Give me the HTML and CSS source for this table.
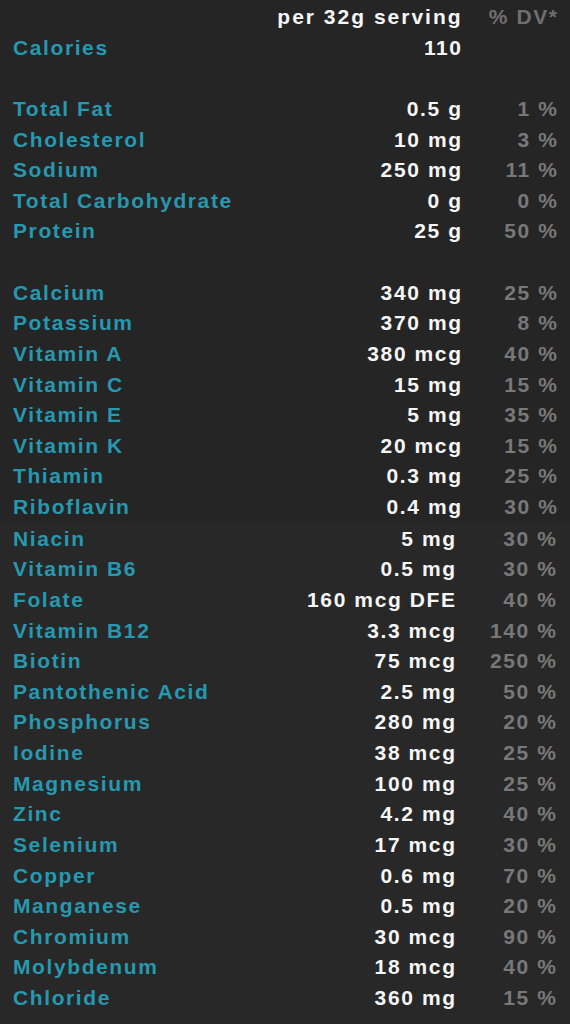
FILE: index.html
```
<!DOCTYPE html>
<html lang="en">
<head>
  <meta charset="UTF-8" />
  <meta name="viewport" content="width=device-width, initial-scale=1" />
  <title>Nutrition Facts</title>
  <link rel="stylesheet" href="styles.css">
</head>
<body>
  <div class="panel top">
    <div class="row head"><span class="name"></span><span class="amount">per 32g serving</span><span class="dv">% DV*</span></div>
    <div class="row"><span class="name">Calories</span><span class="amount">110</span><span class="dv"></span></div>
    <div class="row blank"></div>
    <div class="row"><span class="name">Total Fat</span><span class="amount">0.5 g</span><span class="dv">1 %</span></div>
    <div class="row"><span class="name">Cholesterol</span><span class="amount">10 mg</span><span class="dv">3 %</span></div>
    <div class="row"><span class="name">Sodium</span><span class="amount">250 mg</span><span class="dv">11 %</span></div>
    <div class="row"><span class="name">Total Carbohydrate</span><span class="amount">0 g</span><span class="dv">0 %</span></div>
    <div class="row"><span class="name">Protein</span><span class="amount">25 g</span><span class="dv">50 %</span></div>
    <div class="row blank"></div>
    <div class="row"><span class="name">Calcium</span><span class="amount">340 mg</span><span class="dv">25 %</span></div>
    <div class="row"><span class="name">Potassium</span><span class="amount">370 mg</span><span class="dv">8 %</span></div>
    <div class="row"><span class="name">Vitamin A</span><span class="amount">380 mcg</span><span class="dv">40 %</span></div>
    <div class="row"><span class="name">Vitamin C</span><span class="amount">15 mg</span><span class="dv">15 %</span></div>
    <div class="row"><span class="name">Vitamin E</span><span class="amount">5 mg</span><span class="dv">35 %</span></div>
    <div class="row"><span class="name">Vitamin K</span><span class="amount">20 mcg</span><span class="dv">15 %</span></div>
    <div class="row"><span class="name">Thiamin</span><span class="amount">0.3 mg</span><span class="dv">25 %</span></div>
    <div class="row"><span class="name">Riboflavin</span><span class="amount">0.4 mg</span><span class="dv">30 %</span></div>
  </div>

  <div class="panel bottom">
    <div class="row"><span class="name">Niacin</span><span class="amount">5 mg</span><span class="dv">30 %</span></div>
    <div class="row"><span class="name">Vitamin B6</span><span class="amount">0.5 mg</span><span class="dv">30 %</span></div>
    <div class="row"><span class="name">Folate</span><span class="amount">160 mcg DFE</span><span class="dv">40 %</span></div>
    <div class="row"><span class="name">Vitamin B12</span><span class="amount">3.3 mcg</span><span class="dv">140 %</span></div>
    <div class="row"><span class="name">Biotin</span><span class="amount">75 mcg</span><span class="dv">250 %</span></div>
    <div class="row"><span class="name">Pantothenic Acid</span><span class="amount">2.5 mg</span><span class="dv">50 %</span></div>
    <div class="row"><span class="name">Phosphorus</span><span class="amount">280 mg</span><span class="dv">20 %</span></div>
    <div class="row"><span class="name">Iodine</span><span class="amount">38 mcg</span><span class="dv">25 %</span></div>
    <div class="row"><span class="name">Magnesium</span><span class="amount">100 mg</span><span class="dv">25 %</span></div>
    <div class="row"><span class="name">Zinc</span><span class="amount">4.2 mg</span><span class="dv">40 %</span></div>
    <div class="row"><span class="name">Selenium</span><span class="amount">17 mcg</span><span class="dv">30 %</span></div>
    <div class="row"><span class="name">Copper</span><span class="amount">0.6 mg</span><span class="dv">70 %</span></div>
    <div class="row"><span class="name">Manganese</span><span class="amount">0.5 mg</span><span class="dv">20 %</span></div>
    <div class="row"><span class="name">Chromium</span><span class="amount">30 mcg</span><span class="dv">90 %</span></div>
    <div class="row"><span class="name">Molybdenum</span><span class="amount">18 mcg</span><span class="dv">40 %</span></div>
    <div class="row"><span class="name">Chloride</span><span class="amount">360 mg</span><span class="dv">15 %</span></div>
  </div>
</body>
</html>
```

FILE: styles.css
```
html, body {
  margin: 0;
  padding: 0;
  background: #282828;
}
body {
  font-family: 'Liberation Sans', Arial, sans-serif;
  font-weight: bold;
  font-size: 21px;
  letter-spacing: 1.6px;
}
.panel {
  padding: 0 13px;
}
.panel.top {
  background: #252525;
  padding-top: 2px;
}
.panel.bottom {
  padding-top: 1px;
}
.row {
  display: grid;
  grid-template-columns: 1fr auto 96px;
  height: 30.625px;
  line-height: 30.625px;
  white-space: nowrap;
}
.panel.bottom .row {
  grid-template-columns: 1fr auto 101px;
  padding-right: 1px;
}
.name {
  color: #2698af;
}
.amount {
  color: #f6f6f6;
  text-align: right;
  margin-right: -1.6px;
}
.dv {
  color: #787878;
  text-align: right;
  margin-right: -1.6px;
}
.head .amount {
  letter-spacing: 2px;
}
.head .dv {
  color: #6f6f6f;
}
```
